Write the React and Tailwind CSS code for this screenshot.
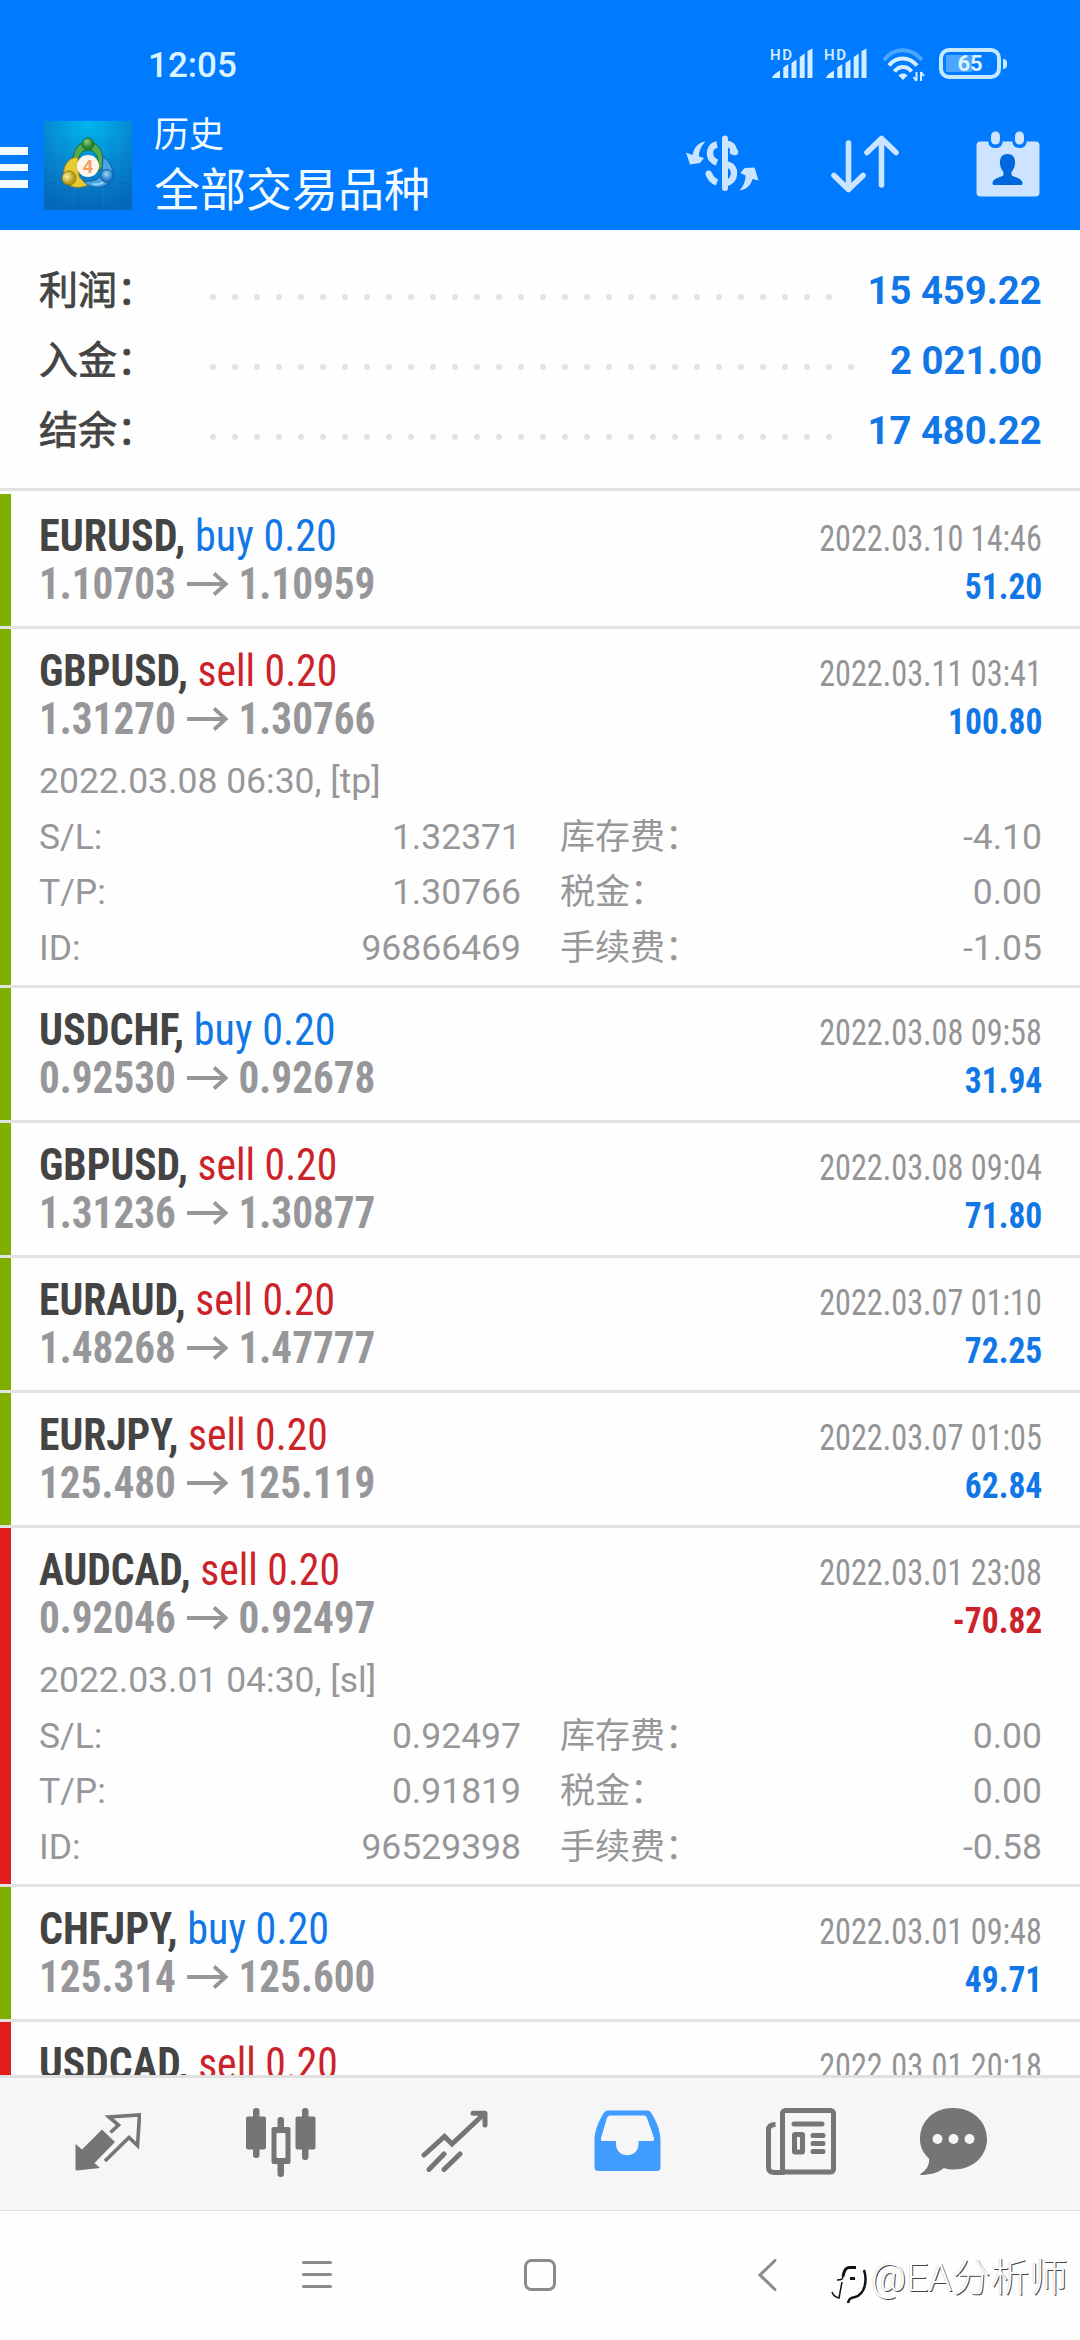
import React from 'react';
import clsx from 'clsx';

const summary = [
    { label: '利润：', value: '15 459.22', dots: 29 },
    { label: '入金：', value: '2 021.00', dots: 30 },
    { label: '结余：', value: '17 480.22', dots: 29 },
];

const deals = [
    { symbol: 'EURUSD', side: 'buy', from: '1.10703', to: '1.10959', time: '2022.03.10 14:46', profit: '51.20' },
    {
        symbol: 'GBPUSD', side: 'sell', from: '1.31270', to: '1.30766', time: '2022.03.11 03:41', profit: '100.80',
        details: { opened: '2022.03.08 06:30, [tp]', sl: '1.32371', tp: '1.30766', id: '96866469', swap: '-4.10', tax: '0.00', fee: '-1.05' },
    },
    { symbol: 'USDCHF', side: 'buy', from: '0.92530', to: '0.92678', time: '2022.03.08 09:58', profit: '31.94' },
    { symbol: 'GBPUSD', side: 'sell', from: '1.31236', to: '1.30877', time: '2022.03.08 09:04', profit: '71.80' },
    { symbol: 'EURAUD', side: 'sell', from: '1.48268', to: '1.47777', time: '2022.03.07 01:10', profit: '72.25' },
    { symbol: 'EURJPY', side: 'sell', from: '125.480', to: '125.119', time: '2022.03.07 01:05', profit: '62.84' },
    {
        symbol: 'AUDCAD', side: 'sell', from: '0.92046', to: '0.92497', time: '2022.03.01 23:08', profit: '-70.82', loss: true,
        details: { opened: '2022.03.01 04:30, [sl]', sl: '0.92497', tp: '0.91819', id: '96529398', swap: '0.00', tax: '0.00', fee: '-0.58' },
    },
    { symbol: 'CHFJPY', side: 'buy', from: '125.314', to: '125.600', time: '2022.03.01 09:48', profit: '49.71' },
    { symbol: 'USDCAD', side: 'sell', time: '2022.03.01 20:18', loss: true },
];

const Signal = () => (
    <svg className="overflow-visible" width="42" height="32" viewBox="0 0 42 32" fill="#d3eeff">
        <text x="-1" y="11.500" fontSize="15" fontWeight="600" textLength="22" fontFamily="Roboto, sans-serif">HD</text>
        <path d="M1 30c0-2 5-6 8-7.500V30ZM12.300 19.500l5-3.500v14h-5ZM20.500 15l5-3.500V30h-5ZM28.700 9l5-3.500V30h-5ZM36.500 3l5-2.500V30h-5Z" />
    </svg>
);

const Wifi = () => (
    <svg width="43" height="34" viewBox="0 0 43 34" fill="none" strokeWidth="4">
        <path d="M2 12C12-1 29-1 40 12" stroke="#4ba6ff" />
        <path d="M7 17.500c7-9.500 20-9.500 28 0" stroke="#d3eeff" />
        <path d="M12.500 23.500c4.500-6 12.500-6 17 0" stroke="#d3eeff" />
        <path d="m16.500 27.500 4.500 4.500 4.500-4.500c-3-2.600-6-2.600-9 0Z" fill="#d3eeff" />
        <path d="M34.500 24v9M34.500 33l-3-4M39 33v-9M39 24l3 4" stroke="#d3eeff" strokeWidth="2" />
    </svg>
);

const Logo = () => (
    <svg width="88" height="89" viewBox="0 0 88 89">
        <defs>
            <radialGradient id="sky" cx="50%" cy="0%" r="100%">
                <stop offset="0" stopColor="#00b7ec" />
                <stop offset="0.550" stopColor="#0585cf" />
                <stop offset="1" stopColor="#0467b8" />
            </radialGradient>
            <radialGradient id="green" cx="40%" cy="30%">
                <stop offset="0" stopColor="#8fcf7c" />
                <stop offset="1" stopColor="#27812f" />
            </radialGradient>
            <radialGradient id="gold" cx="35%" cy="40%">
                <stop offset="0" stopColor="#fbf2a0" />
                <stop offset="1" stopColor="#b99a16" />
            </radialGradient>
            <radialGradient id="blue" cx="45%" cy="35%">
                <stop offset="0" stopColor="#9bd6f8" />
                <stop offset="1" stopColor="#1c78c4" />
            </radialGradient>
        </defs>
        <rect width="88" height="89" fill="url(#sky)" />
        <path d="M14 0v89M29.500 0v89M44 0v89M59 0v89M74 0v89M0 14h88M0 29h88M0 44h88M0 59h88M0 74h88" stroke="#5cc8f5" strokeOpacity="0.100" />
        <path d="M29 44c-1-14 5-23 15-23s16 9 15 24l-5 6c2-14-2-22-10-22-6 0-9 4-10 12Z" fill="#56ab4c" stroke="#1f6b32" />
        <path d="M34 36c-10 0-16 10-14 20 2 8 9 12 18 10l8-2c-5-2-9-5-11-9Z" fill="#e2cb35" stroke="#8b7a18" />
        <path d="M59 36c8 5 11 13 9 20-3 10-15 13-24 8-2-1-3-2-4-4 8 1 15-1 18-7Z" fill="#4aa6e4" stroke="#155d9f" />
        <path d="M49 63c6 1 12-1 14-6" fill="none" stroke="#a5dcfa" strokeWidth="1.500" />
        <circle cx="44" cy="23" r="6" fill="url(#green)" stroke="#1f6b32" />
        <circle cx="25" cy="57" r="7" fill="url(#gold)" stroke="#8b7a18" />
        <circle cx="63" cy="55" r="6.500" fill="url(#blue)" stroke="#155d9f" />
        <circle cx="44" cy="45" r="11" fill="#fdf6ee" />
        <text x="44" y="51.500" fontSize="19" fontWeight="700" textAnchor="middle" fill="#f5a15c" fontFamily="Roboto, sans-serif">4</text>
    </svg>
);

const DollarSwap = () => (
    <svg width="73" height="56" viewBox="0 0 73 56" fill="none" stroke="#cbe4ff" strokeWidth="6.500">
        <path d="M39 3.500v49.500" strokeWidth="6" strokeLinecap="round" />
        <path d="M31 9.500c-5 1-7.500 5-7 10 .5 4 3 6.500 7 8M40 9c5 0 7.500 3 8 7M31 47.500c-5-2-7-5-8-8.500M41 29.500c5 1 7.500 5 7 9.500-.5 5-3 8-8 9" />
        <path d="M47 16.500 49 17M23 39.500l-.2-.8" strokeLinecap="round" />
        <path d="M19.500 6.500C13 7 8 12 6.500 20L0 17.500 4 29.500l10-1.500 4-5-5-1.500c0-6 2-10 6.500-15Z" fill="#cbe4ff" stroke="none" />
        <path d="M53.500 55.500C60 55 65 50 66.500 44l6 1.500-4-13-10 .5-4 5 5 2.500c0 6-2 10-6 15Z" fill="#cbe4ff" stroke="none" />
    </svg>
);

const SortArrows = () => (
    <svg width="68" height="58" viewBox="0 0 68 58" fill="none" stroke="#cbe4ff" strokeWidth="5.600" strokeLinecap="round" strokeLinejoin="round">
        <path d="M17.500 8v46M3 40.500 17.500 54.500 32 40.500M50.500 50V4M36 17.500 50.500 3.500 65 17.500" />
    </svg>
);

const CalendarUser = () => (
    <svg width="64" height="66" viewBox="0 0 64 66">
        <rect x="0.500" y="10.500" width="63" height="55" rx="4" fill="#cde3ff" />
        <path d="M12.500 9v2c0 8 14 8 14 0V9ZM36.500 9v2c0 8 14 8 14 0V9Z" fill="#007aff" />
        <rect x="15" y="0.500" width="9" height="13" rx="4.500" fill="#cde3ff" />
        <rect x="39" y="0.500" width="9" height="13" rx="4.500" fill="#cde3ff" />
        <path d="M31.500 23c5.500 0 8 4 7.500 10-.5 4-2 6-3.500 8v3c1 2 11 3 11 8 0 1.500-.5 2-1.500 2H18c-1 0-1.500-.5-1.500-2 0-5 10-6 11-8v-3c-1.500-2-3-4-3.500-8-.5-6 2-10 7.500-10Z" fill="#0068dd" />
    </svg>
);

const QuotesIcon = () => (
    <svg width="66" height="58" viewBox="0 0 66 58">
        <path d="M27 16.500 40 29 19.500 50l5.500 5L2 57.500q-1.500 0-1.500-1.500V31L7 36.500Z" fill="#757575" />
        <path d="M35.500 19.500 43.500 12 34 4 64.500 2 62.500 32.500 54 24.500 30 48" fill="none" stroke="#757575" strokeWidth="3.600" />
    </svg>
);

const CandlesIcon = () => (
    <svg width="70" height="69" viewBox="0 0 70 69" fill="#757575">
        <rect x="7" y="0" width="6.500" height="50" rx="3" />
        <rect x="0" y="8.500" width="20" height="33" rx="2" />
        <rect x="56" y="0" width="6.500" height="52" rx="3" />
        <rect x="49.500" y="8.500" width="20" height="33" rx="2" />
        <rect x="31.500" y="9" width="6.500" height="60" rx="3" />
        <rect x="25.500" y="19" width="19" height="37" rx="2" />
        <rect x="30.500" y="25" width="9" height="25" rx="1" fill="#f6f6f6" />
    </svg>
);

const TradeIcon = () => (
    <svg width="67" height="62" viewBox="0 0 67 62" fill="none" stroke="#757575" strokeWidth="5" strokeLinecap="round">
        <path d="M3 45 23.500 26.500 31 34 63 4M52 3.200h12M64 3.500V15M8 59.500 23 44M23 59.500 39 44" />
    </svg>
);

const HistoryIcon = () => (
    <svg width="67" height="62" viewBox="0 0 67 62">
        <path d="M14 .5h39c3 0 4 2 5.500 4.500C63 13 66.500 21 66.500 31v26c0 3-1.500 4-4 4h-58c-3 0-4-1.500-4-4V31C.5 21 4 13 8.500 5 10 2 11.500.5 14 .5Z" fill="#409cff" />
        <path d="M17 5.500h32c2 0 3 .5 4 2.500l7 20c.5 2 0 3-2 3H44.500v3c0 15-22.500 15-22.500 0v-3H9c-2 0-2.500-1-2-3l6-20c1-2 2-2.500 4-2.500Z" fill="#f6f6f6" />
    </svg>
);

const NewsIcon = () => (
    <svg width="70" height="67" viewBox="0 0 70 67" fill="none" stroke="#757575" strokeWidth="5">
        <rect x="16.500" y="2.500" width="51" height="61.500" rx="3" />
        <path d="M9.500 16.500C5 16.500 2.500 18 2.500 22v37c0 4 2 5.500 6 5.500h10" />
        <path d="M28 16h28M47 27.500h10M47 35.500h10M47 43.500h10" strokeLinecap="round" />
        <rect x="28.500" y="26.500" width="8" height="17.500" rx="0.500" />
    </svg>
);

const ChatIcon = () => (
    <svg width="67" height="67" viewBox="0 0 67 67">
        <path d="M33 0c19 0 34 13 34 31S52 61.500 34 61.500c-4 0-7-.5-10-1.500C18 65 9 67 1 67c-1 0-1-.7 0-1.500 5-3 9-9 8-15C3 45 0 39 0 31 0 13 14 0 33 0Z" fill="#757575" />
        <circle cx="17.500" cy="31" r="5" fill="#f6f6f6" />
        <circle cx="33.500" cy="31" r="5" fill="#f6f6f6" />
        <circle cx="49.500" cy="31" r="5" fill="#f6f6f6" />
    </svg>
);

const Header = () => (
    <header className="h-[230px] shrink-0 bg-[#007aff] text-[#f2fbff]">
        <div className="flex h-[112px] items-start justify-between pt-[48px] pl-[148px] pr-[73px]">
            <span className="text-[35px] leading-[36px] font-medium text-[#d9f4ff]">12:05</span>
            <div className="flex items-start">
                <Signal />
                <div className="ml-[12px]"><Signal /></div>
                <div className="ml-[15px]"><Wifi /></div>
                <div className="ml-[14px] flex items-center gap-[2px]">
                    <div className="relative h-[31px] w-[62px] rounded-[10px] border-4 border-[#c3e8ff]">
                        <div className="absolute top-[3px] left-[3px] h-[17px] w-[26px] bg-[#4ba6ff]" />
                        <span className="absolute inset-0 text-center text-[22px] leading-[24px] font-bold text-[#dcf4ff]">65</span>
                    </div>
                    <div className="h-[10px] w-[4px] rounded-r bg-[#c3e8ff]" />
                </div>
            </div>
        </div>
        <div className="flex h-[118px] items-start pr-[40px]">
            <div className="mt-[35px] flex w-[28px] flex-col gap-[9px]">
                <div className="h-[7.500px] bg-[#f2fbff]" />
                <div className="h-[7.500px] bg-[#f2fbff]" />
                <div className="h-[7.500px] bg-[#f2fbff]" />
            </div>
            <div className="mt-[9px] ml-[16px]"><Logo /></div>
            <div className="ml-[22px] flex flex-1 flex-col pt-[2px]">
                <span className="text-[35px] leading-[44px]">历史</span>
                <span className="text-[46px] leading-[64px]">全部交易品种</span>
            </div>
            <div className="mt-[23px]"><DollarSwap /></div>
            <div className="mt-[23px] ml-[72px]"><SortArrows /></div>
            <div className="mt-[19px] ml-[77px]"><CalendarUser /></div>
        </div>
    </header>
);

const SummaryRow = ({ label, value, dots }) => (
    <div className="flex h-[70px] items-center">
        <span className="mt-[2px] w-[171px] text-[39px] text-[#444444] [-webkit-text-stroke:0.8px_#444444]">{label}</span>
        <div className="mt-[14px] flex flex-1 gap-[16px]">
            {Array.from({ length: dots }, (_, i) => (
                <div key={i} className="size-[6px] shrink-0 rounded-full bg-[#e2e2e2]" />
            ))}
        </div>
        <span className="mt-[2px] origin-right scale-x-[0.98] text-[39px] font-bold text-[#1177e6]">{value}</span>
    </div>
);

const Details = ({ details }) => (
    <div className="mt-[11px] text-[35.500px] leading-[55.500px] text-[#97979a]">
        <div>{details.opened}</div>
        <div className="grid grid-cols-2 gap-x-[39px]">
            {[
                ['S/L:', details.sl, '库存费：', details.swap],
                ['T/P:', details.tp, '税金：', details.tax],
                ['ID:', details.id, '手续费：', details.fee],
            ].map(([left, leftValue, right, rightValue]) => (
                <React.Fragment key={left}>
                    <div className="flex justify-between"><span>{left}</span><span>{leftValue}</span></div>
                    <div className="flex justify-between"><span className="text-[35px]">{right}</span><span>{rightValue}</span></div>
                </React.Fragment>
            ))}
        </div>
    </div>
);

const Deal = ({ deal }) => (
    <div className="flex shrink-0 border-b-[3px] border-[#e2e2e2]">
        <div className={clsx('w-[11px] shrink-0', deal.loss ? 'bg-[#e21d1d]' : 'bg-[#7fb000]')} />
        <div className={clsx('flex-1 pt-[18px] pr-[38px] pl-[28px]', deal.details ? 'h-[356px]' : 'h-[132px]')}>
            <div className="flex h-[48px] items-baseline justify-between font-['Roboto_Condensed',Roboto,sans-serif] leading-[48px] font-stretch-75%">
                <span className={clsx('origin-left text-[44px]', deal.side === 'buy' ? 'scale-x-[0.957]' : 'scale-x-[0.946]')}>
                    <span className="font-bold text-[#444444]">{deal.symbol}, </span>
                    <span className={deal.side === 'buy' ? 'text-[#1177e6]' : 'text-[#cc2229]'}>{deal.side} 0.20</span>
                </span>
                <span className="origin-right scale-x-[0.895] text-[36px] text-[#949497]">{deal.time}</span>
            </div>
            {deal.profit && (
                <div className="flex h-[48px] items-baseline justify-between font-['Roboto_Condensed',Roboto,sans-serif] leading-[48px] font-bold font-stretch-75%">
                    <span className="origin-left scale-x-[0.936] text-[44px] text-[#97979a]">
                        {deal.from}
                        <svg className="mr-[11px] mb-[6px] ml-[12px] inline-block" width="44" height="24" viewBox="0 0 44 24" fill="none" stroke="#97979a" strokeWidth="4">
                            <path d="M0 12h41M29 1.500 41.500 12 29 22.500" />
                        </svg>
                        {deal.to}
                    </span>
                    <span className={clsx('origin-right scale-x-[0.93] text-[36px]', deal.loss ? 'text-[#cc2229]' : 'text-[#1177e6]')}>{deal.profit}</span>
                </div>
            )}
            {deal.details && <Details details={deal.details} />}
        </div>
    </div>
);

const TabBar = () => (
    <nav className="flex h-[136px] shrink-0 items-start border-t-[3px] border-b border-t-[#e0e0e0] border-b-[#dcdcdc] bg-[#f6f6f6] pl-[75px]">
        <div className="mt-[35px]"><QuotesIcon /></div>
        <div className="mt-[30px] ml-[105px]"><CandlesIcon /></div>
        <div className="mt-[32px] ml-[105px]"><TradeIcon /></div>
        <div className="mt-[32px] ml-[106px]"><HistoryIcon /></div>
        <div className="mt-[30px] ml-[105px]"><NewsIcon /></div>
        <div className="mt-[30px] ml-[84px]"><ChatIcon /></div>
    </nav>
);

const SystemNav = () => (
    <div className="flex h-[129px] shrink-0 items-start pt-[48px] pl-[302px]">
        <svg width="30" height="32" viewBox="0 0 30 32" stroke="#8b8b8b" strokeWidth="3" strokeLinecap="round">
            <path d="M1.500 3.500h27M1.500 15.500h27M1.500 27.500h27" />
        </svg>
        <svg className="ml-[192px]" width="32" height="32" viewBox="0 0 32 32" fill="none" stroke="#8b8b8b" strokeWidth="3">
            <rect x="1.500" y="1.500" width="29" height="29" rx="6" />
        </svg>
        <svg className="ml-[202px]" width="19" height="32" viewBox="0 0 19 32" fill="none" stroke="#8b8b8b" strokeWidth="3" strokeLinecap="round">
            <path d="M17 1.500 2 16l15 14.500" />
        </svg>
        <div className="mt-[-6px] ml-[54px] flex items-start">
            <svg className="mt-[13px]" width="38" height="40" viewBox="0 0 38 40" fill="none" stroke="#111111">
                <path d="M25 1.500h-7c-3 0-5 3-6 9M19 12.500h5" strokeWidth="3" />
                <path d="M12 10c0 3-1 4-6 4M11 16 8 32C4 31 2 29 1 26" strokeWidth="1.500" />
                <path d="M33 4c3 9 2 24-9 27-5 1-6 2-7 6" strokeWidth="2.500" />
            </svg>
            <span className="ml-[2px] text-[38.500px] leading-[50px] font-light whitespace-nowrap text-white [text-shadow:1px_1px_0.5px_#444,-0.5px_-0.5px_0.5px_#ccc]">@EA分析师</span>
        </div>
    </div>
);

const App = () => (
    <div lang="zh-CN" className="flex h-[2340px] w-[1080px] flex-col overflow-hidden bg-[#fefefe] font-[Roboto,'Noto_Sans_CJK_SC',sans-serif]">
        <Header />
        <section className="h-[261px] shrink-0 border-b-[3px] border-[#e2e2e2] pt-[25px] pr-[38px] pl-[39px]">
            {summary.map((row) => (
                <SummaryRow key={row.label} {...row} />
            ))}
        </section>
        <main className="mt-[3px] flex min-h-0 flex-1 flex-col overflow-hidden">
            {deals.map((deal) => (
                <Deal key={deal.time} deal={deal} />
            ))}
        </main>
        <TabBar />
        <SystemNav />
    </div>
);

export default App;
